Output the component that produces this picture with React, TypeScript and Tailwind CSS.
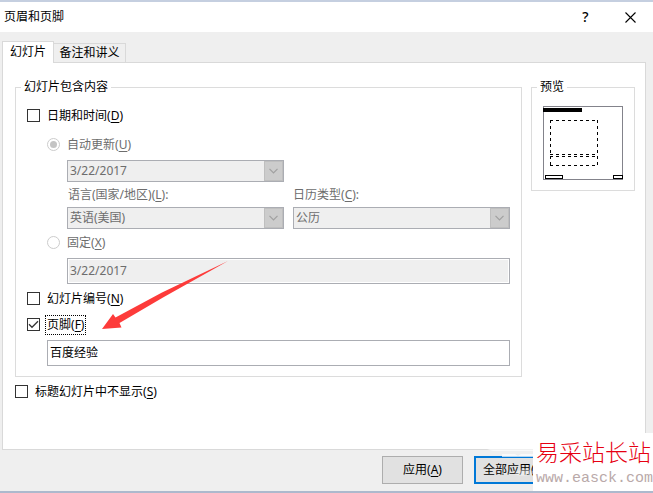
import type { ReactNode } from "react";

function Key({ children }: { children: ReactNode }) {
  return (
    <>
      (<span className="underline underline-offset-2">{children}</span>)
    </>
  );
}

function Check({ id, checked }: { id: string; checked?: boolean }) {
  return (
    <span className="relative mt-px flex size-[13px] shrink-0">
      <input
        id={id}
        type="checkbox"
        defaultChecked={checked}
        className="peer size-[13px] shrink-0 appearance-none border border-[#333333] bg-white"
      />
      <svg
        viewBox="0 0 13 13"
        className="pointer-events-none absolute inset-0 hidden size-[13px] peer-checked:block"
        fill="none"
        stroke="#333333"
        strokeWidth="1.3"
      >
        <path d="M2 6.3 L5 9.3 L11 3.3" />
      </svg>
    </span>
  );
}

function Combo({ id, value, label }: { id: string; value: string; label?: string }) {
  return (
    <div className="relative flex h-[22px] w-full">
      <select
        id={id}
        disabled
        aria-label={label}
        className="h-full w-full appearance-none border border-[#abadb3] bg-[#efefef] pl-[2px] pr-5 text-xs leading-4 text-[#6d6d6d] opacity-100"
      >
        <option>{value}</option>
      </select>
      <span className="pointer-events-none absolute inset-y-px right-px flex w-[19px] items-center justify-center border border-[#bfbfbf] bg-[#cccccc]">
        <svg viewBox="0 0 9 6" className="h-[6px] w-[9px]" fill="none" stroke="#a0a0a0" strokeWidth="1.2">
          <path d="M0.5 0.8 L4.5 4.8 L8.5 0.8" />
        </svg>
      </span>
    </div>
  );
}

const radioClass =
  "mt-px size-[13px] shrink-0 appearance-none rounded-full border border-[#cccccc] bg-white checked:bg-[#c4c4c4] checked:bg-clip-content checked:p-[2px]";

export default function App() {
  return (
    <div className="relative flex min-h-screen flex-col overflow-hidden border-t-2 border-b-2 border-t-[#c5cfe0] border-b-[#adb9cd] bg-[#efefef] font-['Noto_Sans','Noto_Sans_CJK_SC',sans-serif] text-xs leading-4 text-black">
      {/* Title bar */}
      <header className="flex h-[30px] items-center bg-white pl-1">
        <h1 className="flex-1">页眉和页脚</h1>
        <button type="button" aria-label="帮助" className="flex w-[45px] items-center justify-center text-sm font-medium">
          ?
        </button>
        <button type="button" aria-label="关闭" className="flex w-[45px] items-center justify-center">
          <svg viewBox="0 0 11 11" className="size-[11px]" stroke="#000" strokeWidth="1.1">
            <path d="M0.5 0.5 L10.5 10.5 M10.5 0.5 L0.5 10.5" />
          </svg>
        </button>
      </header>

      {/* Tabs */}
      <div role="tablist" className="mt-[9px] flex items-end pl-[2px]">
        <button
          type="button"
          role="tab"
          aria-selected="true"
          className="z-10 -mb-px h-[22px] w-[52px] border border-b-0 border-[#d9d9d9] bg-white pb-[2px]"
        >
          幻灯片
        </button>
        <button type="button" role="tab" aria-selected="false" className="h-[19px] w-[72px] border border-b-0 border-l-0 border-[#d9d9d9]">
          备注和讲义
        </button>
      </div>

      {/* Tab page */}
      <main className="mr-[7px] ml-[2px] flex-1 border border-[#d9d9d9] bg-white pt-4 pr-[10px] pl-3">
        <div className="flex items-start gap-[9px]">
          <fieldset className="min-w-0 flex-1 border border-[#dcdcdc] pr-[11px] pb-[10px] pl-[11px]">
            <legend className="-ml-[6px] px-[3px]">幻灯片包含内容</legend>

            <div className="mt-[13px] flex items-start gap-[7px]">
              <Check id="date" />
              <label htmlFor="date">
                日期和时间<Key>D</Key>
              </label>
            </div>

            <div className="pl-5 text-[#6d6d6d]">
              <div className="mt-[13px] flex items-start gap-[7px]">
                <input id="auto" name="mode" type="radio" defaultChecked disabled className={radioClass} />
                <label htmlFor="auto">
                  自动更新<Key>U</Key>
                </label>
              </div>
              <div className="mt-[7px] grid grid-cols-2 gap-x-[9px] pl-5">
                <Combo id="format" value="3/22/2017" label="日期格式" />
                <label htmlFor="lang" className="col-start-1 mt-[5px] mb-1 pl-px">
                  语言(国家/地区)<Key>L</Key>:
                </label>
                <label htmlFor="calendar" className="mt-[5px] mb-1">
                  日历类型<Key>C</Key>:
                </label>
                <Combo id="lang" value="英语(美国)" />
                <Combo id="calendar" value="公历" />
              </div>
              <div className="mt-[6px] flex items-start gap-[7px]">
                <input id="fixed" name="mode" type="radio" disabled className={radioClass} />
                <label htmlFor="fixed">
                  固定<Key>X</Key>
                </label>
              </div>
              <div className="mt-[7px] pl-5">
                <input
                  type="text"
                  aria-label="固定日期"
                  disabled
                  defaultValue="3/22/2017"
                  className="block h-[26px] w-full border border-[#abadb3] bg-[#efefef] px-[2px] pb-[2px] inset-ring-1 inset-ring-white"
                />
              </div>
            </div>

            <div className="mt-[7px] flex items-start gap-[7px]">
              <Check id="number" />
              <label htmlFor="number">
                幻灯片编号<Key>N</Key>
              </label>
            </div>
            <div className="mt-[10px] flex items-start gap-[7px]">
              <Check id="footer" checked />
              <label htmlFor="footer" className="outline-1 outline-offset-1 outline-black outline-dotted">
                页脚<Key>F</Key>
              </label>
            </div>
            <div className="mt-[7px] pl-5">
              <input
                type="text"
                aria-label="页脚"
                defaultValue="百度经验"
                className="block h-[26px] w-full border border-[#abadb3] bg-white px-[2px] pb-[2px]"
              />
            </div>
          </fieldset>

          <fieldset className="w-[104px] shrink-0 border border-[#dcdcdc] pb-[10px] pl-[11px]">
            <legend className="-ml-[6px] px-[3px]">预览</legend>
            <svg viewBox="0 0 80 74" className="mt-[11px] block h-[74px] w-[80px]" fill="none" stroke="#000" shapeRendering="crispEdges">
              <rect x="0.5" y="0.5" width="79" height="73" stroke="#83838b" />
              <rect x="0" y="2" width="39" height="4" fill="#000" stroke="none" />
              <path d="M7 14.5 H55 M7 48.5 H55 M7 50.5 H55 M7 59.5 H55 M7.5 14 V60 M54.5 14 V60" strokeDasharray="3 3" />
              <rect x="2.5" y="69.5" width="17" height="3" />
              <rect x="70.5" y="69.5" width="9" height="3" />
            </svg>
          </fieldset>
        </div>

        <div className="mt-[7px] flex items-start gap-[7px]">
          <Check id="hide-title" />
          <label htmlFor="hide-title">
            标题幻灯片中不显示<Key>S</Key>
          </label>
        </div>
      </main>

      {/* Dialog buttons */}
      <footer className="flex justify-end gap-[11px] pt-[6px] pr-[98px] pb-[7px]">
        <button type="button" className="h-[28px] w-[81px] border border-[#adadad] bg-[#e1e1e1]">
          应用<Key>A</Key>
        </button>
        <button type="button" aria-label="全部应用" className="h-[28px] w-[81px] border-2 border-[#0078d7] bg-[#e1e1e1] pl-[7px] text-left">
          <span className="block w-[50px] overflow-hidden whitespace-nowrap">全部应用(</span>
        </button>
      </footer>

      {/* Resize handle on the window's lower edge */}
      <span className="absolute -bottom-[2px] left-[320px] h-[2px] w-[5px] border border-b-0 border-[#444444] bg-white" />

      {/* Pointer arrow */}
      <svg viewBox="0 0 128 70" className="pointer-events-none absolute top-[257px] left-[102px] h-[70px] w-[128px]" fill="#fd3b3a">
        <path d="M0 70 L11 55 L13.5 58.5 L60 33.5 L126 2 L61 38.5 L17.5 64 L19.5 68.5 Z" />
      </svg>

      {/* Site mark */}
      <svg viewBox="0 0 46 30" className="pointer-events-none absolute right-[120px] bottom-[14px] h-[30px] w-[46px]" fill="#fff">
        <path d="M0 2 L46 2 V4 L6 4 Z" opacity="0.6" />
        <path d="M15 7 H28 L31 9 L34 7 H46 V10 H15 Z" opacity="0.7" />
        <path d="M15 25 Q24 30 30 25 T46 24 V27 Q36 30 30 28 T15 27 Z" opacity="0.4" />
      </svg>
      <div className="absolute right-0 -bottom-[2px] flex h-[60px] w-[120px] flex-col bg-white pt-[6px] pl-[3px] whitespace-nowrap">
        <span className="font-['KaiTi','Noto_Sans_CJK_SC',serif] text-[23px] leading-6 font-light text-[#e60012]">易采站长站</span>
        <span className="font-['Liberation_Mono',monospace] text-[15px] leading-8 text-[#b9a9a9]">www.easck.com</span>
      </div>
    </div>
  );
}
